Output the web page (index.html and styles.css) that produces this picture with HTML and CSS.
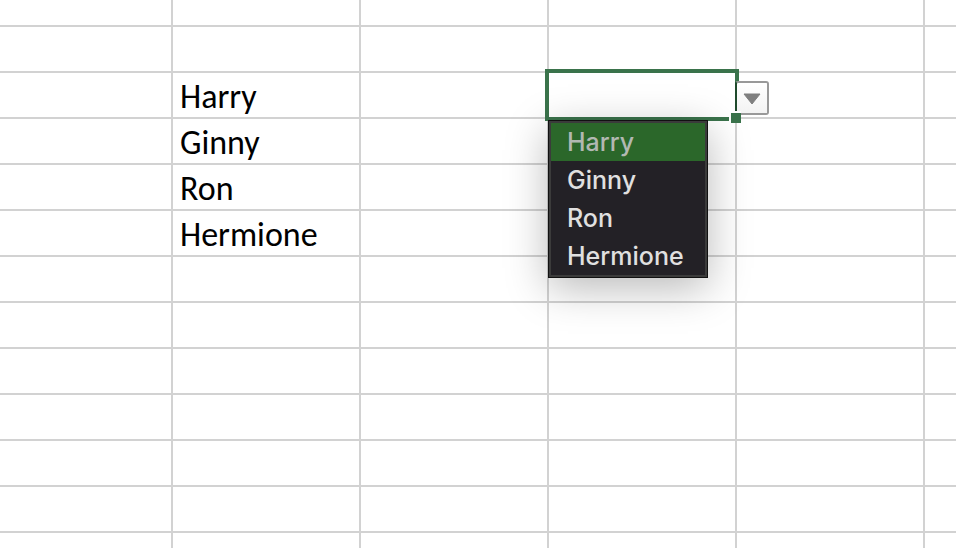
FILE: index.html
```html
<!DOCTYPE html>
<html lang="en">
<head>
    <meta charset="UTF-8">
    <meta name="viewport" content="width=device-width, initial-scale=1.0">
    <title>Spreadsheet</title>
    <link rel="stylesheet" href="styles.css">
</head>
<body>
    <main class="window">
    <table class="sheet">
        <colgroup>
            <col class="col-first">
            <col class="col">
            <col class="col">
            <col class="col">
            <col class="col">
            <col>
        </colgroup>
        <tbody>
            <tr class="row-cut"><td></td><td></td><td></td><td></td><td></td><td></td></tr>
            <tr><td></td><td></td><td></td><td></td><td></td><td></td></tr>
            <tr>
                <td></td>
                <td>Harry</td>
                <td></td>
                <td class="selected">
                    <div class="outline"></div>
                    <button class="dropdown-btn" type="button" aria-label="Show list">
                        <svg width="18" height="12" viewBox="0 0 18 12"><path d="M1 1h16L9 11z" fill="#7f7f7f" stroke="#7f7f7f" stroke-linejoin="round"/></svg>
                    </button>
                    <span class="handle"></span>
                    <select class="menu" size="4" aria-label="Name">
                        <option class="active">Harry</option>
                        <option>Ginny</option>
                        <option>Ron</option>
                        <option>Hermione</option>
                    </select>
                </td>
                <td></td>
                <td></td>
            </tr>
            <tr><td></td><td>Ginny</td><td></td><td></td><td></td><td></td></tr>
            <tr><td></td><td>Ron</td><td></td><td></td><td></td><td></td></tr>
            <tr><td></td><td>Hermione</td><td></td><td></td><td></td><td></td></tr>
            <tr><td></td><td></td><td></td><td></td><td></td><td></td></tr>
            <tr><td></td><td></td><td></td><td></td><td></td><td></td></tr>
            <tr><td></td><td></td><td></td><td></td><td></td><td></td></tr>
            <tr><td></td><td></td><td></td><td></td><td></td><td></td></tr>
            <tr><td></td><td></td><td></td><td></td><td></td><td></td></tr>
            <tr><td></td><td></td><td></td><td></td><td></td><td></td></tr>
            <tr><td></td><td></td><td></td><td></td><td></td><td></td></tr>
        </tbody>
    </table>
    </main>
</body>
</html>
```
FILE: styles.css
```css
* {
    box-sizing: border-box;
}
body {
    margin: 0;
    background: #ffffff;
    color: #000000;
    font-family: Carlito, Lato, sans-serif;
}
.window {
    height: 100vh;
    overflow: hidden;
}
/* Grid */
.sheet {
    width: 100%;
    table-layout: fixed;
    border-collapse: separate;
    border-spacing: 0;
}
.col-first {
    width: 173px;
}
.col {
    width: 188px;
}
.sheet td {
    height: 46px;
    padding: 4px 6px 0 7px;
    border-right: 2px solid #d2d2d2;
    border-bottom: 2px solid #d2d2d2;
    font-size: 34px;
    line-height: 40px;
    white-space: nowrap;
}
.sheet td:last-child {
    border-right: none;
}
.sheet .row-cut td {
    height: 27px;
}
/* Selected cell */
.sheet .selected {
    position: relative;
}
.outline {
    position: absolute;
    inset: -4px;
    border: 4px solid #3a734b;
    z-index: 2;
    pointer-events: none;
}
.handle {
    position: absolute;
    right: -6px;
    bottom: -6px;
    width: 12px;
    height: 12px;
    background: #3a734b;
    border-top: 2px solid #ffffff;
    border-left: 2px solid #ffffff;
    z-index: 4;
}
.dropdown-btn {
    position: absolute;
    left: 100%;
    top: 8px;
    width: 34px;
    height: 34px;
    display: flex;
    align-items: center;
    justify-content: center;
    padding: 2px 0 0;
    background: linear-gradient(#ffffff, #f3f3f3);
    border: 2px solid #999999;
    border-left-color: #1f4a2c;
    border-radius: 3px;
    z-index: 3;
}
/* Drop-down list */
.menu {
    position: absolute;
    top: calc(100% + 3px);
    left: -1px;
    width: 160px;
    height: 158px;
    padding: 2px;
    background: #232126;
    border: 1px solid #111111;
    border-radius: 0;
    box-shadow: inset 0 0 0 2px #3b3b3b, 0 10px 40px rgba(0, 0, 0, 0.28);
    color: #e0e0e0;
    font-family: Inter, sans-serif;
    font-size: 25px;
    outline: none;
    overflow: hidden;
    z-index: 5;
}
.menu option {
    height: 38px;
    padding: 4px 16px;
    font-weight: 500;
}
.menu .active {
    background: #2b672a;
    color: #b2b8b2;
}
```
